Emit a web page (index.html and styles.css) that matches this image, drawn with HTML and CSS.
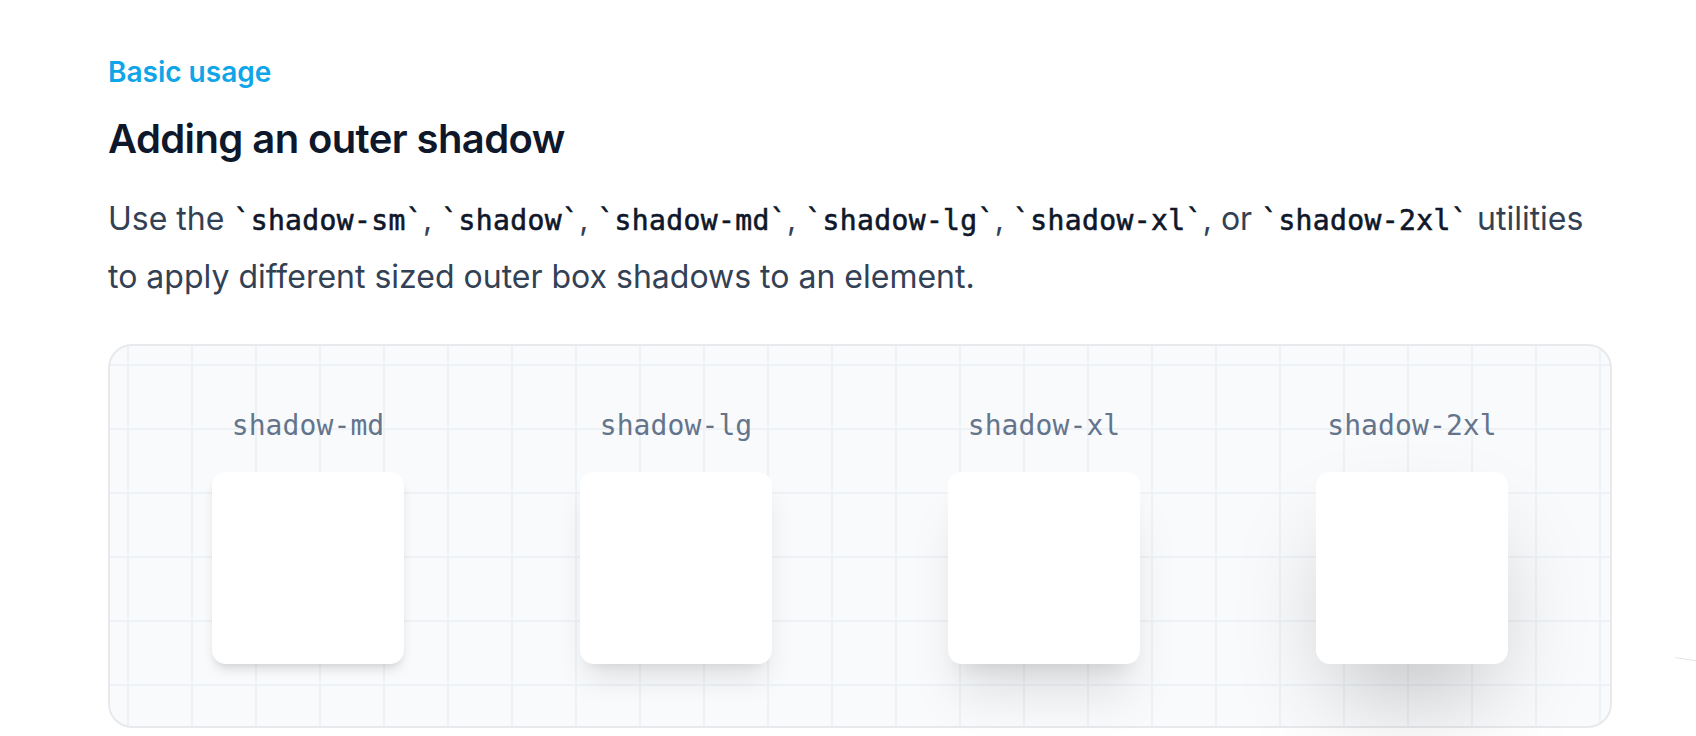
FILE: index.html
```html
<!DOCTYPE html>
<html lang="en">
<head>
<meta charset="utf-8">
<title>Adding an outer shadow</title>
<link rel="stylesheet" href="styles.css">
</head>
<body>
<main class="section">
  <p class="eyebrow">Basic usage</p>
  <h3 class="title">Adding an outer shadow</h3>
  <p class="lead">Use the <code>`shadow-sm`</code>, <code>`shadow`</code>, <code>`shadow-md`</code>, <code>`shadow-lg`</code>, <code>`shadow-xl`</code>, or <code>`shadow-2xl`</code> utilities<br>to apply different sized outer box shadows to an element.</p>
  <div class="demo">
    <div class="item">
      <span class="label">shadow-md</span>
      <div class="box box-md"></div>
    </div>
    <div class="item">
      <span class="label">shadow-lg</span>
      <div class="box box-lg"></div>
    </div>
    <div class="item">
      <span class="label">shadow-xl</span>
      <div class="box box-xl"></div>
    </div>
    <div class="item">
      <span class="label">shadow-2xl</span>
      <div class="box box-2xl"></div>
    </div>
  </div>
</main>
<div class="edge-line"></div>
</body>
</html>
```
FILE: styles.css
```css
html, body {
  margin: 0;
  padding: 0;
  background: #ffffff;
}

body {
  font-family: "Inter", "Noto Sans", sans-serif;
  overflow: hidden;
  position: relative;
  width: 1696px;
  height: 736px;
}

.section {
  width: 1504px;
  margin-left: 108px;
  padding-top: 52px;
}

.eyebrow {
  margin: 0;
  font-size: 28px;
  line-height: 40px;
  font-weight: 600;
  color: #0ea5e9;
}

.title {
  margin: 23px 0 0;
  font-size: 40px;
  line-height: 48px;
  font-weight: 600;
  letter-spacing: -0.6px;
  color: #0f172a;
}

.lead {
  margin: 28px 0 0;
  font-size: 32px;
  line-height: 56px;
  font-weight: 400;
  color: #334155;
}

.lead code {
  font-family: "DejaVu Sans Mono", "Liberation Mono", monospace;
  font-size: 28px;
  font-weight: 400;
  letter-spacing: 0.38px;
  -webkit-text-stroke: 0.6px #0f172a;
  color: #0f172a;
}

.demo {
  margin-top: 39px;
  box-sizing: border-box;
  width: 1504px;
  border: 2px solid #e7e9ed;
  border-radius: 24px;
  background-color: #f8fafc;
  background-image:
    linear-gradient(to right, #eef1f6 2px, transparent 2px),
    linear-gradient(to bottom, #eef1f6 2px, transparent 2px);
  background-size: 64px 64px;
  background-position: 17px 18px;
  padding: 60px 30px 62px;
  display: grid;
  grid-template-columns: repeat(4, 1fr);
  column-gap: 32px;
}

.item {
  display: flex;
  flex-direction: column;
  align-items: center;
}

.label {
  font-family: "DejaVu Sans Mono", "Liberation Mono", monospace;
  font-size: 28px;
  line-height: 40px;
  letter-spacing: 0.1px;
  color: #64748b;
}

.box {
  margin-top: 26px;
  width: 192px;
  height: 192px;
  border-radius: 14px;
  background: #ffffff;
}

.box-md {
  box-shadow: 0 8px 12px -2px rgba(0, 0, 0, 0.1), 0 4px 8px -4px rgba(0, 0, 0, 0.1);
}

.box-lg {
  box-shadow: 0 20px 30px -6px rgba(0, 0, 0, 0.1), 0 8px 12px -8px rgba(0, 0, 0, 0.1);
}

.box-xl {
  box-shadow: 0 40px 50px -10px rgba(0, 0, 0, 0.1), 0 16px 20px -12px rgba(0, 0, 0, 0.1);
}

.box-2xl {
  box-shadow: 0 50px 100px -24px rgba(0, 0, 0, 0.25);
}

.edge-line {
  position: absolute;
  left: 1675px;
  top: 657px;
  width: 24px;
  height: 1px;
  background: #e3e5e9;
  transform: rotate(9deg);
  transform-origin: left center;
}
```
